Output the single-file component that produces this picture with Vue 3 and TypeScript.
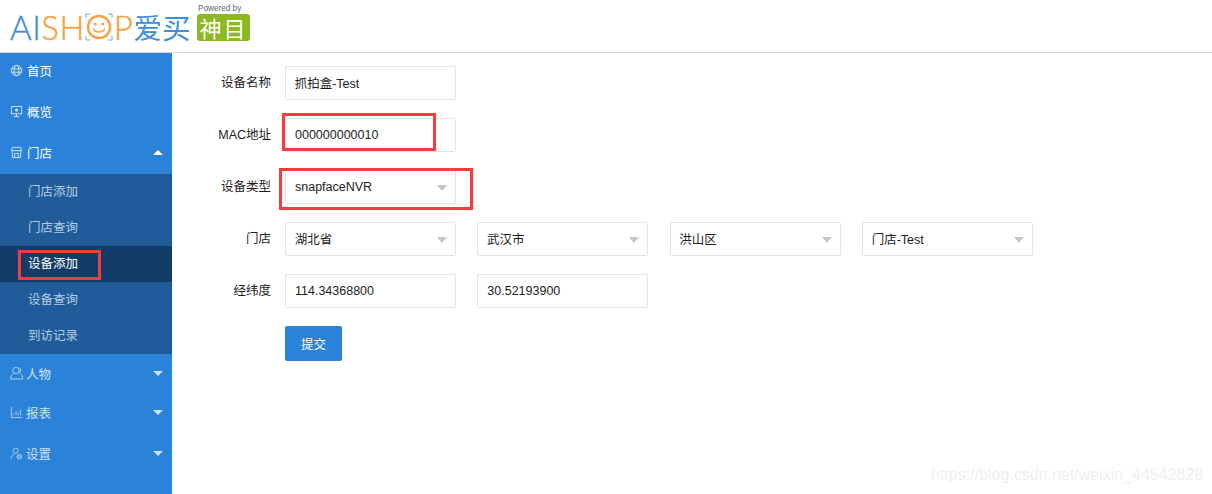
<script setup lang="ts">
interface SubItem { label: string; active?: boolean }
const subItems: SubItem[] = [
  { label: '门店添加' },
  { label: '门店查询' },
  { label: '设备添加', active: true },
  { label: '设备查询' },
  { label: '到访记录' },
]
const regions = ['湖北省', '武汉市', '洪山区', '门店-Test']
</script>

<template>
  <div class="page">
    <header class="header">
      <div class="logo">
        <span class="latin blue">AI</span><span class="latin orange">SH</span>
        <svg class="smile" width="28" height="28" viewBox="0 0 28 28" fill="none">
          <path d="M1 5V1h4M23 1h4v4M27 23v4h-4M5 27H1v-4" stroke="#6aa7e6" stroke-width="1" />
          <circle cx="14" cy="14" r="11" stroke="#f7a242" stroke-width="2.4" />
          <circle cx="10.3" cy="11" r="1.5" fill="#f7a242" />
          <circle cx="17.7" cy="11" r="1.5" fill="#f7a242" />
          <path d="M8.5 16c1.5 4 9.500 4 11 0" stroke="#f7a242" stroke-width="1.6" stroke-linecap="round" />
        </svg>
        <span class="latin orange">P</span><span class="cn-logo blue">爱买</span>
      </div>
      <div class="partner">
        <span class="powered">Powered by</span>
        <span class="badge">神目</span>
      </div>
    </header>

    <div class="body">
      <aside class="sidebar">
        <div class="menu first">
          <svg class="ico" viewBox="0 0 14 14" fill="none" stroke="currentColor"><circle cx="7" cy="7" r="5.500" /><ellipse cx="7" cy="7" rx="2.500" ry="5.500" /><path d="M1.500 5.200h11M1.500 8.800h11" /></svg>
          <span>首页</span>
        </div>
        <div class="menu">
          <svg class="ico" viewBox="0 0 14 14" fill="none" stroke="currentColor"><rect x="1.500" y="1.500" width="11" height="8" /><path d="M4 12.500h6M7 9.500v3" /><circle cx="7" cy="5.500" r="1.200" fill="currentColor" /></svg>
          <span>概览</span>
        </div>
        <div class="menu open">
          <svg class="ico" viewBox="0 0 14 14" fill="none" stroke="currentColor"><path d="M2.500 1.500h9l1 3.500h-11zM2.500 5v7.500h9V5M5 12.500V8h4v4.500" /></svg>
          <span>门店</span>
          <i class="arrow up"></i>
        </div>
        <ul class="sub">
          <li v-for="item in subItems" :key="item.label" :class="{ active: item.active }">
            {{ item.label }}
            <b v-if="item.active" class="mark side-mark"></b>
          </li>
        </ul>
        <div class="menu dim after-sub">
          <svg class="ico wide" viewBox="0 0 14 14" fill="none" stroke="currentColor"><circle cx="6" cy="4.500" r="3.200" /><path d="M3.500 7.500C2 8.300.8 10 .8 13h12c0-2.600-1-4.500-2.300-5.300M9 1.500c2 .8 2.200 4 .5 5.500" /></svg>
          <span>人物</span>
          <i class="arrow"></i>
        </div>
        <div class="menu dim">
          <svg class="ico" viewBox="0 0 14 14" fill="none" stroke="currentColor"><path d="M1.500 1v11.500H13" /><path d="M4 10V8M6.500 10V5.500M9 10V7M11.500 10V4" /></svg>
          <span class="nudge">报表</span>
          <i class="arrow"></i>
        </div>
        <div class="menu dim">
          <svg class="ico" viewBox="0 0 14 14" fill="none" stroke="currentColor" stroke-width="0.800"><circle cx="6" cy="4" r="2.800" /><path d="M1 13c0-3 2-5 4-5.500" /><circle cx="10" cy="10.500" r="2.500" fill="currentColor" fill-opacity="0.400" /></svg>
          <span class="nudge">设置</span>
          <i class="arrow"></i>
        </div>
      </aside>

      <main class="main">
        <div class="row">
          <label class="lbl">设备名称</label>
          <div class="field">抓拍盒-Test</div>
        </div>
        <div class="row">
          <label class="lbl">MAC地址</label>
          <div class="field num">000000000010<b class="mark mac-mark"></b></div>
        </div>
        <div class="row">
          <label class="lbl">设备类型</label>
          <div class="field num select">snapfaceNVR<i class="caret"></i><b class="mark type-mark"></b></div>
        </div>
        <div class="row">
          <label class="lbl">门店</label>
          <div v-for="r in regions" :key="r" class="field select">{{ r }}<i class="caret"></i></div>
        </div>
        <div class="row">
          <label class="lbl">经纬度</label>
          <div class="field num">114.34368800</div>
          <div class="field num">30.52193900</div>
        </div>
        <div class="row">
          <span class="lbl"></span>
          <button class="submit" type="button">提交</button>
        </div>
      </main>
    </div>
    <div class="watermark">https://blog.csdn.net/weixin_44542828</div>
  </div>
</template>

<style>
html, body { margin: 0; background: #fff; overflow: hidden; }
</style>

<style scoped>
.page {
  position: relative;
  width: 1212px;
  height: 494px;
  overflow: hidden;
  display: flex;
  flex-direction: column;
  font-family: "Liberation Sans", "Noto Sans CJK SC", sans-serif;
  font-size: 12.5px;
  color: #1c1c1c;
}
.header {
  height: 52px;
  flex: none;
  border-bottom: 1px solid #d9d9d9;
  display: flex;
  align-items: flex-start;
  padding-left: 10px;
}
.logo { display: flex; align-items: center; height: 30px; margin-top: 12px; width: 187px; flex: none; }
.latin { font-family: "Lato", sans-serif; font-weight: 300; font-size: 33px; line-height: 30px; letter-spacing: 0.5px; -webkit-text-stroke: 0.4px currentColor; }
.blue { color: #3b8de0; }
.orange { color: #f7a242; }
.smile { flex: none; margin: 0 1px 0 0; }
.cn-logo { font-family: "Noto Sans CJK SC", sans-serif; font-size: 28.500px; line-height: 30px; font-weight: 400; margin-left: 0; white-space: nowrap; }
.partner { display: flex; flex-direction: column; align-items: flex-start; margin-top: 5px; }
.powered { font-size: 8.200px; line-height: 8px; color: #666; margin-left: 1px; }
.badge {
  margin-top: 1px;
  width: 53px;
  height: 27px;
  background: #8cb923;
  border-radius: 3px;
  color: #fff;
  font-family: "Noto Sans CJK SC", sans-serif;
  font-size: 22px;
  font-weight: 400;
  letter-spacing: 2px;
  line-height: 27px;
  text-align: center;
  white-space: nowrap;
}
.body { flex: 1; display: flex; min-height: 0; }
.sidebar { width: 172px; flex: none; background: #2a82d9; }
.menu {
  height: 40.330px;
  display: flex;
  align-items: center;
  padding: 0 9px 3px 10px;
  box-sizing: border-box;
  color: #fff;
}
.menu.first { padding-bottom: 5px; }
.menu.after-sub { padding-bottom: 2px; }
.menu.dim { color: #cfe3f7; }
.nudge { margin-left: -1px; }
.ico { width: 13px; height: 13px; flex: none; margin-right: 4px; stroke-width: 1; opacity: 0.8; }
.ico.wide { width: 14px; height: 14px; margin-right: 2px; }
.arrow {
  margin-left: auto;
  width: 0;
  height: 0;
  border-left: 5.500px solid transparent;
  border-right: 5.500px solid transparent;
  border-top: 5px solid #cfe3f7;
}
.arrow.up { border-top: 0; border-bottom: 5px solid #fff; }
.sub { list-style: none; margin: 0; padding: 0; background: #1f5c99; }
.sub li {
  position: relative;
  height: 36px;
  line-height: 36px;
  padding-left: 28px;
  color: #b4cde6;
}
.sub li.active { background: #133d68; color: #fff; }
.main { flex: 1; padding-top: 13px; }
.row { display: flex; align-items: flex-start; height: 52px; }
.lbl { width: 99px; flex: none; margin-right: 14px; text-align: right; line-height: 34px; white-space: nowrap; }
.field {
  position: relative;
  box-sizing: border-box;
  width: 171px;
  height: 34px;
  flex: none;
  margin-right: 21.330px;
  padding-left: 8.700px;
  line-height: 34px;
  border: 1px solid #e4e4e4;
  border-radius: 2px;
  background: #fff;
}
.field.num { line-height: 32px; padding-left: 9px; }
.caret {
  position: absolute;
  right: 8px;
  top: 14px;
  width: 0;
  height: 0;
  border-left: 5.500px solid transparent;
  border-right: 5.500px solid transparent;
  border-top: 6px solid #c6c6c6;
}
.submit {
  width: 57px;
  height: 35px;
  padding: 0;
  border: 0;
  border-radius: 2px;
  background: #2a82d9;
  color: #fff;
  font: inherit;
}
.mark { position: absolute; box-sizing: border-box; border: 3px solid #f73b3f; pointer-events: none; }
.side-mark { left: 18px; top: 4px; width: 83px; height: 30px; }
.mac-mark { left: -4px; top: -6px; width: 154px; height: 38px; }
.type-mark { left: -7px; top: -3px; width: 194px; height: 42px; }
.watermark {
  position: absolute;
  left: 931px;
  top: 465px;
  font-size: 16px;
  line-height: 20px;
  color: #efefef;
  white-space: nowrap;
}
</style>
